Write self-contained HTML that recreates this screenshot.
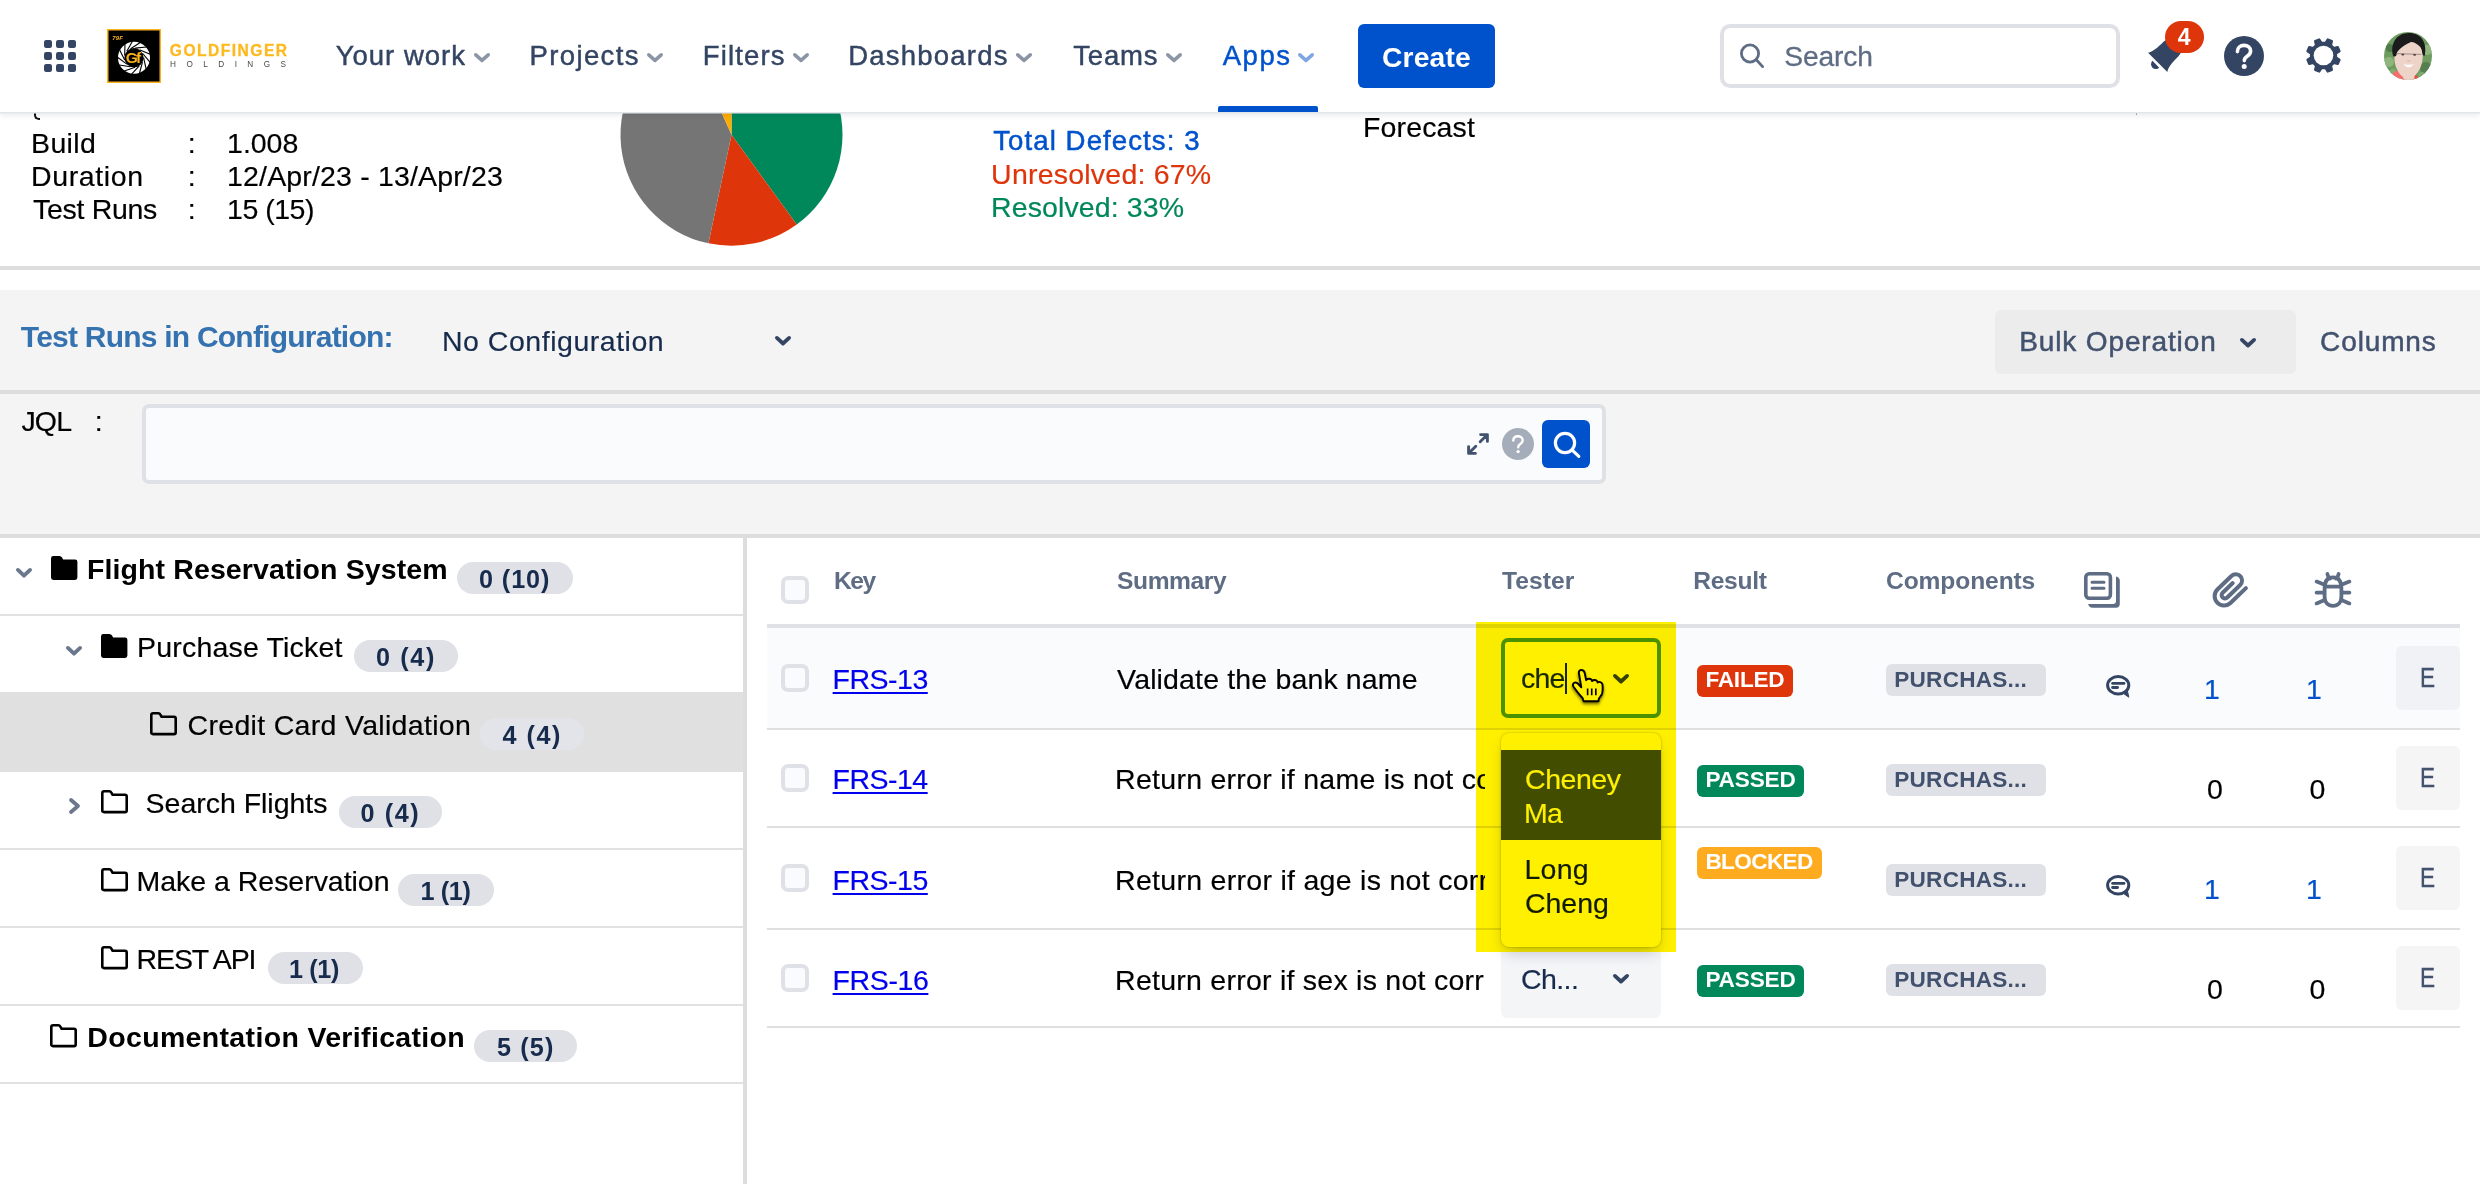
<!DOCTYPE html>
<html lang="en">
<head>
<meta charset="utf-8">
<title>Test Execution - Jira</title>
<style>
html,body{margin:0;padding:0;}
body{width:2480px;height:1184px;overflow:hidden;position:relative;background:#fff;font-family:"Liberation Sans",sans-serif;}
#app{position:absolute;left:0;top:0;width:2480px;height:1184px;overflow:hidden;background:#fff;will-change:transform;}
.t{position:absolute;white-space:pre;line-height:1;margin:0;padding:0;display:block;}
.abs,.abs>*{position:absolute;}
.box{position:absolute;box-sizing:border-box;}
svg{position:absolute;overflow:visible;}
a.t{text-decoration:underline;text-decoration-thickness:2px;text-underline-offset:3px;}
.cb{position:absolute;box-sizing:border-box;width:28px;height:28px;border:4px solid #DFE1E6;border-radius:7px;background:#FAFBFC;}
.loz{position:absolute;box-sizing:border-box;height:32px;border-radius:6px;}
.pill{position:absolute;box-sizing:border-box;height:32px;border-radius:16px;background:#DFE1E6;}
.ebtn{position:absolute;left:2396px;width:64px;height:64px;border-radius:6px;background:#F4F5F7;}
.hline{position:absolute;left:0;width:2480px;background:#DDDDDD;}
.trow{position:absolute;left:0;width:743px;}
.tline{position:absolute;left:0;width:743px;height:2px;background:#E1E1E1;}
.rline{position:absolute;left:767px;width:1693px;height:2px;background:#DFDFE1;}
</style>
</head>
<body>
<div id="app">

<main>
<section class="box" style="left:0;top:112px;width:2480px;height:154px;background:#fff">
</section>
<div class="box" style="left:34px;top:112px;width:6px;height:8px;border-left:2.5px solid #111;border-bottom:2.5px solid #111;border-radius:0 0 0 5px"></div>
<div class="box" style="left:2135.5px;top:112px;width:1.5px;height:3px;background:#9aa0a8"></div>
<span class="t" style="left:31.1px;top:128.8px;font-size:28.5px;letter-spacing:0.32px;color:#000;-webkit-text-stroke:0.18px #000;">Build</span>
<span class="t" style="left:187.8px;top:128.8px;font-size:28.5px;letter-spacing:0.00px;color:#000;-webkit-text-stroke:0.18px #000;">:</span>
<span class="t" style="left:227.1px;top:128.8px;font-size:28.5px;letter-spacing:-0.04px;color:#000;-webkit-text-stroke:0.18px #000;">1.008</span>
<span class="t" style="left:31.1px;top:162.0px;font-size:28.5px;letter-spacing:0.61px;color:#000;-webkit-text-stroke:0.18px #000;">Duration</span>
<span class="t" style="left:187.8px;top:162.0px;font-size:28.5px;letter-spacing:0.00px;color:#000;-webkit-text-stroke:0.18px #000;">:</span>
<span class="t" style="left:227.1px;top:162.0px;font-size:28.5px;letter-spacing:0.16px;color:#000;-webkit-text-stroke:0.18px #000;">12/Apr/23 - 13/Apr/23</span>
<span class="t" style="left:33.1px;top:195.3px;font-size:28.5px;letter-spacing:-0.33px;color:#000;-webkit-text-stroke:0.18px #000;">Test Runs</span>
<span class="t" style="left:187.8px;top:195.3px;font-size:28.5px;letter-spacing:0.00px;color:#000;-webkit-text-stroke:0.18px #000;">:</span>
<span class="t" style="left:227.1px;top:195.3px;font-size:28.5px;letter-spacing:-0.50px;color:#000;-webkit-text-stroke:0.18px #000;">15 (15)</span>
<svg style="left:0;top:0" width="2480" height="270" viewBox="0 0 2480 270"><path d="M731.50 134.80 L731.50 23.80 A111 111 0 0 1 796.74 224.60 Z" fill="#00875A"/><path d="M731.50 134.80 L796.74 224.60 A111 111 0 0 1 708.42 243.37 Z" fill="#DE350B"/><path d="M731.50 134.80 L708.42 243.37 A111 111 0 0 1 686.35 33.40 Z" fill="#757575"/><path d="M731.50 134.80 L686.35 33.40 A111 111 0 0 1 731.50 23.80 Z" fill="#FFAB00"/></svg>
<span class="t" style="left:993.2px;top:127.3px;font-size:27.6px;letter-spacing:1.08px;color:#0052CC;-webkit-text-stroke:0.5px #0052CC;">Total Defects: 3</span>
<span class="t" style="left:991.1px;top:160.0px;font-size:28.5px;letter-spacing:0.22px;color:#DE350B;-webkit-text-stroke:0.18px #DE350B;">Unresolved: 67%</span>
<span class="t" style="left:991.1px;top:193.0px;font-size:28.5px;letter-spacing:0.11px;color:#00875A;-webkit-text-stroke:0.18px #00875A;">Resolved: 33%</span>
<span class="t" style="left:1363.1px;top:112.8px;font-size:28.5px;letter-spacing:0.12px;color:#000;-webkit-text-stroke:0.18px #000;">Forecast</span>
<div class="hline" style="top:266px;height:4px"></div>
<section class="box" style="left:0;top:290px;width:2480px;height:246px;background:#F4F4F4"></section>
<span class="t" style="left:20.8px;top:322.2px;font-size:30px;letter-spacing:-0.77px;color:#3572B0;font-weight:700;">Test Runs in Configuration:</span>
<span class="t" style="left:441.9px;top:327.3px;font-size:28.5px;letter-spacing:0.53px;color:#172B4D;-webkit-text-stroke:0.18px #172B4D;">No Configuration</span>
<svg style="left:775.0px;top:336.0px" width="16" height="9.8" viewBox="0 0 16 9.8"><path d="M1.90 1.90 L8.00 7.50 L14.10 1.90" fill="none" stroke="#344563" stroke-width="3.8" stroke-linecap="round" stroke-linejoin="round"/></svg>
<div class="box" style="left:1995px;top:310px;width:301px;height:64px;border-radius:6px;background:#ECECED"></div>
<span class="t" style="left:2019.2px;top:328.3px;font-size:28px;letter-spacing:0.87px;color:#42526E;-webkit-text-stroke:0.5px #42526E;">Bulk Operation</span>
<svg style="left:2240.0px;top:338.0px" width="16" height="9.8" viewBox="0 0 16 9.8"><path d="M1.90 1.90 L8.00 7.50 L14.10 1.90" fill="none" stroke="#344563" stroke-width="3.8" stroke-linecap="round" stroke-linejoin="round"/></svg>
<span class="t" style="left:2320.1px;top:328.3px;font-size:28px;letter-spacing:0.87px;color:#42526E;-webkit-text-stroke:0.5px #42526E;">Columns</span>
<div class="hline" style="top:390px;height:4px"></div>
<span class="t" style="left:21.4px;top:406.7px;font-size:28.5px;letter-spacing:-0.80px;color:#000;-webkit-text-stroke:0.18px #000;">JQL</span>
<span class="t" style="left:94.8px;top:406.7px;font-size:28.5px;letter-spacing:0.00px;color:#000;-webkit-text-stroke:0.18px #000;">:</span>
<div class="box" style="left:142px;top:404px;width:1464px;height:80px;border:4px solid #DFE1E6;border-radius:7px;background:#FAFBFC"></div>
<svg style="left:1466px;top:432px" width="24" height="24" viewBox="0 0 24 24" fill="none" stroke="#42526E" stroke-width="2.9" stroke-linecap="round" stroke-linejoin="round"><path d="M14.2 9.8 L21 3 M14.6 2.6 H21.4 V9.4"/><path d="M9.8 14.2 L3 21 M2.6 14.6 V21.4 H9.4"/></svg>
<svg style="left:1502px;top:428px" width="32" height="32" viewBox="0 0 32 32"><circle cx="16" cy="16" r="16" fill="#A5ADBA"/><path d="M11.3 12.6 C11.3 9.7 13.4 8.2 16 8.2 C18.7 8.2 20.7 9.8 20.7 12.2 C20.7 14.3 19.4 15.2 18 16.2 C16.8 17 16.2 17.7 16.2 19.3" fill="none" stroke="#fff" stroke-width="2.4" stroke-linecap="round"/><circle cx="16.1" cy="23.6" r="1.7" fill="#fff"/></svg>
<div class="box" style="left:1542px;top:420px;width:48px;height:48px;border-radius:6px;background:#0052CC"></div>
<svg style="left:1542px;top:420px" width="48" height="48" viewBox="0 0 48 48"><circle cx="23" cy="23" r="9.6" fill="none" stroke="#fff" stroke-width="3.2"/><path d="M30.2 30.2 L36.8 36.4" stroke="#fff" stroke-width="3.2" stroke-linecap="round"/></svg>
<div class="hline" style="top:534px;height:4px"></div>
<aside class="box" style="left:0;top:538px;width:743px;height:646px;background:#fff"></aside>
<div class="box" style="left:743px;top:538px;width:4px;height:646px;background:#DDDDDD"></div>
<div class="box" style="left:0;top:692px;width:743px;height:79.5px;background:#E0E0E0"></div>
<div class="tline" style="top:614px"></div>
<div class="tline" style="top:848px"></div>
<div class="tline" style="top:926px"></div>
<div class="tline" style="top:1004px"></div>
<div class="tline" style="top:1082px"></div>
<svg style="left:50.5px;top:556.0px" width="26.4" height="24" preserveAspectRatio="none" viewBox="0 0 27 24"><path d="M0 2.4 Q0 0 2.4 0 H8.6 Q10.4 0 11.3 1.6 L12.4 3.4 H24.6 Q27 3.4 27 5.8 V21.6 Q27 24 24.6 24 H2.4 Q0 24 0 21.6 Z" fill="#000"/></svg>
<svg style="left:16.0px;top:567.9px" width="16" height="10" viewBox="0 0 16 10"><path d="M1.95 1.95 L8.00 7.65 L14.05 1.95" fill="none" stroke="#6B778C" stroke-width="3.9" stroke-linecap="round" stroke-linejoin="round"/></svg>
<span class="t" style="left:87.0px;top:555.0px;font-size:28.5px;letter-spacing:0.11px;color:#000;font-weight:700;">Flight Reservation System</span>
<div class="pill" style="left:457.0px;top:562.0px;width:116.0px;background:#DFE1E6"></div>
<span class="t" style="left:479.0px;top:566.5px;font-size:25.2px;letter-spacing:0.92px;color:#172B4D;font-weight:700;">0 (10)</span>
<svg style="left:100.5px;top:634.3px" width="26.4" height="24" preserveAspectRatio="none" viewBox="0 0 27 24"><path d="M0 2.4 Q0 0 2.4 0 H8.6 Q10.4 0 11.3 1.6 L12.4 3.4 H24.6 Q27 3.4 27 5.8 V21.6 Q27 24 24.6 24 H2.4 Q0 24 0 21.6 Z" fill="#000"/></svg>
<svg style="left:66.0px;top:646.1px" width="16" height="10" viewBox="0 0 16 10"><path d="M1.95 1.95 L8.00 7.65 L14.05 1.95" fill="none" stroke="#6B778C" stroke-width="3.9" stroke-linecap="round" stroke-linejoin="round"/></svg>
<span class="t" style="left:137.1px;top:633.3px;font-size:28.5px;letter-spacing:0.18px;color:#000;-webkit-text-stroke:0.18px #000;">Purchase Ticket</span>
<div class="pill" style="left:354.0px;top:640.2px;width:104.0px;background:#DFE1E6"></div>
<span class="t" style="left:376.0px;top:644.7px;font-size:25.2px;letter-spacing:1.65px;color:#172B4D;font-weight:700;">0 (4)</span>
<svg style="left:150.3px;top:712.3px" width="27" height="24" viewBox="0 0 27 24"><path d="M1.3 3 Q1.3 1.3 3 1.3 H8.4 Q9.6 1.3 10.2 2.4 L11.6 4.7 H24 Q25.7 4.7 25.7 6.4 V20.4 Q25.7 22.1 24 22.1 H3 Q1.3 22.1 1.3 20.4 Z" fill="none" stroke="#000" stroke-width="2.6" stroke-linejoin="round"/></svg>
<span class="t" style="left:187.6px;top:711.3px;font-size:28.5px;letter-spacing:0.31px;color:#000;-webkit-text-stroke:0.18px #000;">Credit Card Validation</span>
<div class="pill" style="left:479.6px;top:718.2px;width:104.2px;background:#E3E4E9"></div>
<span class="t" style="left:502.6px;top:722.7px;font-size:25.2px;letter-spacing:1.50px;color:#172B4D;font-weight:700;">4 (4)</span>
<svg style="left:100.5px;top:790.3px" width="27" height="24" viewBox="0 0 27 24"><path d="M1.3 3 Q1.3 1.3 3 1.3 H8.4 Q9.6 1.3 10.2 2.4 L11.6 4.7 H24 Q25.7 4.7 25.7 6.4 V20.4 Q25.7 22.1 24 22.1 H3 Q1.3 22.1 1.3 20.4 Z" fill="none" stroke="#000" stroke-width="2.6" stroke-linejoin="round"/></svg>
<svg style="left:69.0px;top:797.8px" width="11.5" height="16" viewBox="0 0 11.5 16"><path d="M2 2 L9 8 L2 14" fill="none" stroke="#6B778C" stroke-width="3.8" stroke-linecap="round" stroke-linejoin="round"/></svg>
<span class="t" style="left:145.6px;top:789.3px;font-size:28.5px;letter-spacing:-0.02px;color:#000;-webkit-text-stroke:0.18px #000;">Search Flights</span>
<div class="pill" style="left:339.0px;top:796.2px;width:103.0px;background:#DFE1E6"></div>
<span class="t" style="left:360.6px;top:800.7px;font-size:25.2px;letter-spacing:1.57px;color:#172B4D;font-weight:700;">0 (4)</span>
<svg style="left:100.5px;top:868.3px" width="27" height="24" viewBox="0 0 27 24"><path d="M1.3 3 Q1.3 1.3 3 1.3 H8.4 Q9.6 1.3 10.2 2.4 L11.6 4.7 H24 Q25.7 4.7 25.7 6.4 V20.4 Q25.7 22.1 24 22.1 H3 Q1.3 22.1 1.3 20.4 Z" fill="none" stroke="#000" stroke-width="2.6" stroke-linejoin="round"/></svg>
<span class="t" style="left:136.6px;top:867.3px;font-size:28.5px;letter-spacing:-0.03px;color:#000;-webkit-text-stroke:0.18px #000;">Make a Reservation</span>
<div class="pill" style="left:398.4px;top:874.2px;width:95.6px;background:#DFE1E6"></div>
<span class="t" style="left:420.4px;top:878.7px;font-size:25.2px;letter-spacing:-0.35px;color:#172B4D;font-weight:700;">1 (1)</span>
<svg style="left:100.5px;top:946.3px" width="27" height="24" viewBox="0 0 27 24"><path d="M1.3 3 Q1.3 1.3 3 1.3 H8.4 Q9.6 1.3 10.2 2.4 L11.6 4.7 H24 Q25.7 4.7 25.7 6.4 V20.4 Q25.7 22.1 24 22.1 H3 Q1.3 22.1 1.3 20.4 Z" fill="none" stroke="#000" stroke-width="2.6" stroke-linejoin="round"/></svg>
<span class="t" style="left:136.6px;top:945.3px;font-size:28.5px;letter-spacing:-1.12px;color:#000;-webkit-text-stroke:0.18px #000;">REST API</span>
<div class="pill" style="left:267.8px;top:952.2px;width:95.4px;background:#DFE1E6"></div>
<span class="t" style="left:289.0px;top:956.7px;font-size:25.2px;letter-spacing:-0.35px;color:#172B4D;font-weight:700;">1 (1)</span>
<svg style="left:50.3px;top:1024.3px" width="27" height="24" viewBox="0 0 27 24"><path d="M1.3 3 Q1.3 1.3 3 1.3 H8.4 Q9.6 1.3 10.2 2.4 L11.6 4.7 H24 Q25.7 4.7 25.7 6.4 V20.4 Q25.7 22.1 24 22.1 H3 Q1.3 22.1 1.3 20.4 Z" fill="none" stroke="#000" stroke-width="2.6" stroke-linejoin="round"/></svg>
<span class="t" style="left:87.3px;top:1023.3px;font-size:28.5px;letter-spacing:0.34px;color:#000;font-weight:700;">Documentation Verification</span>
<div class="pill" style="left:473.8px;top:1030.2px;width:103.2px;background:#DFE1E6"></div>
<span class="t" style="left:497.0px;top:1034.7px;font-size:25.2px;letter-spacing:1.15px;color:#172B4D;font-weight:700;">5 (5)</span>
<section class="box" style="left:747px;top:538px;width:1733px;height:646px;background:#fff"></section>
<div class="box" style="left:767px;top:628px;width:1693px;height:100px;background:#FAFBFC"></div>
<div class="cb" style="left:781px;top:576px"></div>
<span class="t" style="left:834.0px;top:568.8px;font-size:24.6px;letter-spacing:-1.47px;color:#5E6C84;font-weight:700;">Key</span>
<span class="t" style="left:1117.0px;top:568.8px;font-size:24.6px;letter-spacing:-0.40px;color:#5E6C84;font-weight:700;">Summary</span>
<span class="t" style="left:1502.0px;top:568.8px;font-size:24.6px;letter-spacing:0.06px;color:#5E6C84;font-weight:700;">Tester</span>
<span class="t" style="left:1693.3px;top:568.8px;font-size:24.6px;letter-spacing:-0.31px;color:#5E6C84;font-weight:700;">Result</span>
<span class="t" style="left:1886.0px;top:568.8px;font-size:24.6px;letter-spacing:-0.11px;color:#5E6C84;font-weight:700;">Components</span>
<svg style="left:2084px;top:572px" width="36" height="36" viewBox="0 0 36 36"><rect x="1.8" y="1.8" width="24.6" height="24.4" rx="3.4" fill="none" stroke="#5E6C84" stroke-width="3.6"/><path d="M8 10.2 H20 M8 16.2 H20" stroke="#5E6C84" stroke-width="3" stroke-linecap="round"/><path d="M32 4.4 Q35.8 5 35.8 8.8 V31.8 Q35.8 35.8 31.8 35.8 H8.6 Q5 35.8 4.2 32 H29 Q32 32 32 29 Z" fill="#5E6C84"/></svg>
<svg style="left:2212px;top:571px" width="36" height="38" viewBox="0 0 36 38"><path d="M33.92 17.08 L18.46 32.01 A9.4 9.4 0 0 1 5.40 18.49 L19.42 4.94 A6.3 6.3 0 0 1 28.18 14.01 L15.23 26.51 A3.3 3.3 0 0 1 10.64 21.76 L20.71 12.04" fill="none" stroke="#5E6C84" stroke-width="4" stroke-linecap="round" stroke-linejoin="round"/></svg>
<svg style="left:2314px;top:571px" width="38" height="38" viewBox="0 0 38 38" fill="none" stroke="#5E6C84" stroke-width="3.8" stroke-linecap="round" stroke-linejoin="round"><path d="M10.6 17.5 C10.6 9.8 14 6.4 19 6.4 C24 6.4 27.4 9.8 27.4 17.5 V25.5 C27.4 31.5 23.8 34.9 19 34.9 C14.2 34.9 10.6 31.5 10.6 25.5 Z"/><path d="M11 15.7 H27"/><path d="M13.4 3 Q13.8 6 16 7.4 M24.6 3 Q24.2 6 22 7.4"/><path d="M10 13.6 L2.6 10.6 M10.2 21.6 H2.6 M10.6 29 L2.6 32.4 M28 13.6 L35.4 10.6 M27.8 21.6 H35.4 M27.4 29 L35.4 32.4"/></svg>
<div class="box" style="left:767px;top:624px;width:1693px;height:4px;background:#DFE1E6"></div>
<div class="rline" style="top:728px"></div>
<div class="rline" style="top:826px"></div>
<div class="rline" style="top:928px"></div>
<div class="rline" style="top:1026px"></div>
<div class="cb" style="left:781px;top:664px"></div>
<a class="t" style="left:832.6px;top:665.3px;font-size:28.5px;letter-spacing:-0.50px;color:#0000EE;-webkit-text-stroke:0.18px #0000EE;">FRS-13</a>
<div class="cb" style="left:781px;top:764px"></div>
<a class="t" style="left:832.6px;top:765.3px;font-size:28.5px;letter-spacing:-0.52px;color:#0000EE;-webkit-text-stroke:0.18px #0000EE;">FRS-14</a>
<div class="cb" style="left:781px;top:864px"></div>
<a class="t" style="left:832.6px;top:865.8px;font-size:28.5px;letter-spacing:-0.50px;color:#0000EE;-webkit-text-stroke:0.18px #0000EE;">FRS-15</a>
<div class="cb" style="left:781px;top:964px"></div>
<a class="t" style="left:832.6px;top:965.8px;font-size:28.5px;letter-spacing:-0.40px;color:#0000EE;-webkit-text-stroke:0.18px #0000EE;">FRS-16</a>
<div class="loz" style="left:1697px;top:665px;width:96.0px;background:#DE350B"></div>
<span class="t" style="left:1705.4px;top:669.3px;font-size:22.6px;letter-spacing:-0.22px;color:#fff;font-weight:700;">FAILED</span>
<div class="loz" style="left:1697px;top:765px;width:107.0px;background:#00875A"></div>
<span class="t" style="left:1705.4px;top:769.3px;font-size:22.6px;letter-spacing:-0.16px;color:#fff;font-weight:700;">PASSED</span>
<div class="loz" style="left:1697px;top:847px;width:124.6px;background:#FFAB1F"></div>
<span class="t" style="left:1705.4px;top:851.3px;font-size:22.6px;letter-spacing:-0.63px;color:#fff;font-weight:700;">BLOCKED</span>
<div class="loz" style="left:1697px;top:965px;width:107.0px;background:#00875A"></div>
<span class="t" style="left:1705.4px;top:969.3px;font-size:22.6px;letter-spacing:-0.16px;color:#fff;font-weight:700;">PASSED</span>
<div class="loz" style="left:1886px;top:664px;width:160px;background:#DFE1E6"></div>
<span class="t" style="left:1894.3px;top:668.7px;font-size:22.6px;letter-spacing:0.21px;color:#42526E;font-weight:700;">PURCHAS...</span>
<div class="loz" style="left:1886px;top:764px;width:160px;background:#DFE1E6"></div>
<span class="t" style="left:1894.3px;top:768.7px;font-size:22.6px;letter-spacing:0.21px;color:#42526E;font-weight:700;">PURCHAS...</span>
<div class="loz" style="left:1886px;top:864px;width:160px;background:#DFE1E6"></div>
<span class="t" style="left:1894.3px;top:868.7px;font-size:22.6px;letter-spacing:0.21px;color:#42526E;font-weight:700;">PURCHAS...</span>
<div class="loz" style="left:1886px;top:964px;width:160px;background:#DFE1E6"></div>
<span class="t" style="left:1894.3px;top:968.7px;font-size:22.6px;letter-spacing:0.21px;color:#42526E;font-weight:700;">PURCHAS...</span>
<svg style="left:2105.6px;top:674.6px" width="26" height="24" viewBox="0 0 26 24"><ellipse cx="12.2" cy="10.3" rx="10.6" ry="8.7" fill="none" stroke="#344563" stroke-width="3"/><path d="M16.2 17.6 L22.8 22.2 L21.2 14.8 Z" fill="#344563" stroke="#344563" stroke-width="1" stroke-linejoin="round"/><path d="M6.6 8.4 H18" stroke="#344563" stroke-width="2.8" stroke-linecap="round"/><path d="M6.6 12.5 H11.6" stroke="#344563" stroke-width="2.8" stroke-linecap="round"/></svg>
<svg style="left:2105.6px;top:874.6px" width="26" height="24" viewBox="0 0 26 24"><ellipse cx="12.2" cy="10.3" rx="10.6" ry="8.7" fill="none" stroke="#344563" stroke-width="3"/><path d="M16.2 17.6 L22.8 22.2 L21.2 14.8 Z" fill="#344563" stroke="#344563" stroke-width="1" stroke-linejoin="round"/><path d="M6.6 8.4 H18" stroke="#344563" stroke-width="2.8" stroke-linecap="round"/><path d="M6.6 12.5 H11.6" stroke="#344563" stroke-width="2.8" stroke-linecap="round"/></svg>
<span class="t" style="left:2204.0px;top:675.3px;font-size:28.5px;letter-spacing:0.00px;color:#0052CC;-webkit-text-stroke:0.18px #0052CC;">1</span>
<span class="t" style="left:2306.0px;top:675.3px;font-size:28.5px;letter-spacing:0.00px;color:#0052CC;-webkit-text-stroke:0.18px #0052CC;">1</span>
<span class="t" style="left:2207.0px;top:775.3px;font-size:28.5px;letter-spacing:0.00px;color:#000;-webkit-text-stroke:0.18px #000;">0</span>
<span class="t" style="left:2309.5px;top:775.3px;font-size:28.5px;letter-spacing:0.00px;color:#000;-webkit-text-stroke:0.18px #000;">0</span>
<span class="t" style="left:2204.0px;top:875.3px;font-size:28.5px;letter-spacing:0.00px;color:#0052CC;-webkit-text-stroke:0.18px #0052CC;">1</span>
<span class="t" style="left:2306.0px;top:875.3px;font-size:28.5px;letter-spacing:0.00px;color:#0052CC;-webkit-text-stroke:0.18px #0052CC;">1</span>
<span class="t" style="left:2207.0px;top:975.3px;font-size:28.5px;letter-spacing:0.00px;color:#000;-webkit-text-stroke:0.18px #000;">0</span>
<span class="t" style="left:2309.5px;top:975.3px;font-size:28.5px;letter-spacing:0.00px;color:#000;-webkit-text-stroke:0.18px #000;">0</span>
<div class="ebtn" style="top:646px;background:#F1F2F5"></div>
<span class="t" style="left:2418.0px;top:663.3px;font-size:28.3px;letter-spacing:0.00px;color:#42526E;-webkit-text-stroke:0.3px #42526E;transform:scaleX(0.8);transform-origin:50% 50%;">E</span>
<div class="ebtn" style="top:746px;background:#F5F5F6"></div>
<span class="t" style="left:2418.0px;top:763.3px;font-size:28.3px;letter-spacing:0.00px;color:#42526E;-webkit-text-stroke:0.3px #42526E;transform:scaleX(0.8);transform-origin:50% 50%;">E</span>
<div class="ebtn" style="top:846px;background:#F5F5F6"></div>
<span class="t" style="left:2418.0px;top:863.3px;font-size:28.3px;letter-spacing:0.00px;color:#42526E;-webkit-text-stroke:0.3px #42526E;transform:scaleX(0.8);transform-origin:50% 50%;">E</span>
<div class="ebtn" style="top:946px;background:#F5F5F6"></div>
<span class="t" style="left:2418.0px;top:963.3px;font-size:28.3px;letter-spacing:0.00px;color:#42526E;-webkit-text-stroke:0.3px #42526E;transform:scaleX(0.8);transform-origin:50% 50%;">E</span>
<div class="box" style="left:1501px;top:938px;width:160px;height:80px;border-radius:6px;background:#F4F5F7"></div>
<span class="t" style="left:1521.1px;top:964.5px;font-size:28.5px;letter-spacing:-0.61px;color:#172B4D;-webkit-text-stroke:0.18px #172B4D;">Ch...</span>
<svg style="left:1613.0px;top:974.2px" width="16" height="9.8" viewBox="0 0 16 9.8"><path d="M1.90 1.90 L8.00 7.50 L14.10 1.90" fill="none" stroke="#344563" stroke-width="3.8" stroke-linecap="round" stroke-linejoin="round"/></svg>
<div class="box" style="left:1501px;top:733px;width:160px;height:214px;border-radius:8px;background:#fff;box-shadow:0 0 2px rgba(9,30,66,0.35),0 8px 16px -4px rgba(9,30,66,0.28)"></div>
<div class="box hl" style="left:1476px;top:622px;width:200px;height:330px;overflow:hidden;background:#FFF000">
<div class="box" style="left:0;top:2px;width:200px;height:4px;background:#DFD400"></div>
<div class="box" style="left:0;top:6px;width:200px;height:100px;background:#FAEC00"></div>
<div class="box" style="left:0;top:106px;width:200px;height:2px;background:#DFD200"></div>
<div class="box" style="left:0;top:204px;width:200px;height:2px;background:#DFD200"></div>
<div class="box" style="left:0;top:306px;width:200px;height:2px;background:#DFD200"></div>
<div class="box" style="left:25px;top:16px;width:160px;height:80px;border:4px solid #4C9100;border-radius:7px;background:#FFF000"></div>
<span class="t" style="left:45.1px;top:41.8px;font-size:28.5px;letter-spacing:-0.84px;color:#172800;-webkit-text-stroke:0.18px #172800;">che</span>
<div class="box" style="left:89px;top:41px;width:2px;height:31px;background:#172800"></div>
<svg style="left:137.0px;top:52.0px" width="16" height="9.8" viewBox="0 0 16 9.8"><path d="M1.90 1.90 L8.00 7.50 L14.10 1.90" fill="none" stroke="#344100" stroke-width="3.8" stroke-linecap="round" stroke-linejoin="round"/></svg>
<div class="box" style="left:25px;top:111px;width:160px;height:214px;border-radius:8px;background:#FFF000;box-shadow:0 0 2px rgba(9,28,0,0.35),0 8px 16px -4px rgba(9,28,0,0.28)"></div>
<div class="box" style="left:25px;top:128px;width:160px;height:90px;background:#424D00"></div>
<span class="t" style="left:49.1px;top:143.3px;font-size:28.5px;letter-spacing:-0.47px;color:#FFF000;-webkit-text-stroke:0.18px #FFF000;">Cheney</span>
<span class="t" style="left:48.1px;top:176.9px;font-size:28.5px;letter-spacing:-0.72px;color:#FFF000;-webkit-text-stroke:0.18px #FFF000;">Ma</span>
<span class="t" style="left:48.5px;top:233.3px;font-size:28.5px;letter-spacing:0.22px;color:#101A00;-webkit-text-stroke:0.18px #101A00;">Long</span>
<span class="t" style="left:49.1px;top:266.7px;font-size:28.5px;letter-spacing:-0.08px;color:#101A00;-webkit-text-stroke:0.18px #101A00;">Cheng</span>
<svg style="left:95.5px;top:46px;filter:drop-shadow(0.5px 2px 1.6px rgba(0,0,0,0.55))" width="40" height="40" viewBox="1040 410 584 584"><path d="M1140 480 C1140 445 1160 438 1182 440 C1208 444 1222 462 1228 492 L1246 588 C1262 566 1300 556 1322 580 C1326 584 1330 592 1332 600 C1352 578 1392 578 1410 606 C1412 610 1414 616 1414 622 C1436 604 1472 614 1484 646 C1490 690 1490 740 1480 782 C1472 812 1440 840 1432 858 L1426 896 L1210 896 L1196 852 C1170 824 1110 752 1062 684 C1048 660 1052 640 1072 626 C1092 614 1112 624 1128 640 L1176 692 Z" fill="#FFF000" stroke="#000" stroke-width="28" stroke-linejoin="round"/><path d="M1268 708 V808 M1328 708 V808 M1388 708 V808" stroke="#000" stroke-width="24" stroke-linecap="butt"/></svg>
</div>
<div class="box" style="left:1117px;top:657.0px;width:368px;height:44px;overflow:hidden">
<span class="t" style="left:0.1px;top:8.3px;font-size:28.5px;letter-spacing:0.15px;color:#000;-webkit-text-stroke:0.18px #000;">Validate the bank name</span>
</div>
<div class="box" style="left:1117px;top:757.0px;width:368px;height:44px;overflow:hidden">
<span class="t" style="left:-1.9px;top:8.3px;font-size:28.5px;letter-spacing:0.27px;color:#000;-webkit-text-stroke:0.18px #000;">Return error if name is not correct</span>
</div>
<div class="box" style="left:1117px;top:857.5px;width:368px;height:44px;overflow:hidden">
<span class="t" style="left:-1.9px;top:8.3px;font-size:28.5px;letter-spacing:0.29px;color:#000;-webkit-text-stroke:0.18px #000;">Return error if age is not correct</span>
</div>
<div class="box" style="left:1117px;top:957.5px;width:368px;height:44px;overflow:hidden">
<span class="t" style="left:-1.9px;top:8.3px;font-size:28.5px;letter-spacing:0.25px;color:#000;-webkit-text-stroke:0.18px #000;">Return error if sex is not correct</span>
</div>
</main>
<header class="box" style="left:0;top:0;width:2480px;height:112px;background:#fff;z-index:5;box-shadow:0 1.5px 0 #E3E5EA, 0 3px 6px rgba(9,30,66,0.10);">
<svg style="left:44px;top:40px" width="32" height="32" viewBox="0 0 32 32" fill="#344563"><rect x="0" y="0" width="8" height="8" rx="2.2"/><rect x="12" y="0" width="8" height="8" rx="2.2"/><rect x="24" y="0" width="8" height="8" rx="2.2"/><rect x="0" y="12" width="8" height="8" rx="2.2"/><rect x="12" y="12" width="8" height="8" rx="2.2"/><rect x="24" y="12" width="8" height="8" rx="2.2"/><rect x="0" y="24" width="8" height="8" rx="2.2"/><rect x="12" y="24" width="8" height="8" rx="2.2"/><rect x="24" y="24" width="8" height="8" rx="2.2"/></svg>
<svg style="left:107px;top:29px" width="54" height="54" viewBox="0 0 54 54"><rect x="0.75" y="0.75" width="52.5" height="52.5" fill="#000" stroke="#FBB31C" stroke-width="1.5"/><circle cx="27" cy="28.7" r="16" fill="#fff"/><path d="M36.60 28.70 L39.07 39.95" stroke="#000" stroke-width="1.1"/><path d="M35.50 33.16 L32.46 44.27" stroke="#000" stroke-width="1.1"/><path d="M32.45 36.60 L24.60 45.02" stroke="#000" stroke-width="1.1"/><path d="M28.16 38.23 L17.29 42.04" stroke="#000" stroke-width="1.1"/><path d="M23.60 37.68 L12.20 36.00" stroke="#000" stroke-width="1.1"/><path d="M19.81 35.07 L10.51 28.29" stroke="#000" stroke-width="1.1"/><path d="M17.68 31.00 L12.59 20.67" stroke="#000" stroke-width="1.1"/><path d="M17.68 26.40 L17.97 14.89" stroke="#000" stroke-width="1.1"/><path d="M19.81 22.33 L25.42 12.28" stroke="#000" stroke-width="1.1"/><path d="M23.60 19.72 L33.24 13.42" stroke="#000" stroke-width="1.1"/><path d="M28.16 19.17 L39.62 18.07" stroke="#000" stroke-width="1.1"/><path d="M32.45 20.80 L43.11 25.15" stroke="#000" stroke-width="1.1"/><path d="M35.50 24.24 L42.92 33.05" stroke="#000" stroke-width="1.1"/><circle cx="27" cy="28.7" r="9.6" fill="#000"/></svg>
<span class="t" style="left:125.8px;top:50.4px;font-size:15.5px;letter-spacing:-1.86px;color:#FBB31C;font-weight:700;">Gf</span>
<span class="t" style="left:112.2px;top:34.6px;font-size:6px;letter-spacing:0.16px;color:#FBB31C;font-weight:700;font-style:italic;">79F</span>
<span class="t" style="left:169.8px;top:43.2px;font-size:15.6px;letter-spacing:1.48px;color:#FDB91E;font-weight:700;-webkit-text-stroke:0.3px #FDB91E;">GOLDFINGER</span>
<span class="t" style="left:170.0px;top:61.0px;font-size:8.2px;letter-spacing:10.47px;color:#4a4a4a;">HOLDINGS</span>
<span class="t" style="left:335.7px;top:42.4px;font-size:27.5px;letter-spacing:1.00px;color:#344563;-webkit-text-stroke:0.45px #344563;">Your work</span>
<svg style="left:474.0px;top:52.5px" width="16" height="9.5" viewBox="0 0 16 9.5"><path d="M1.80 1.80 L8.00 7.30 L14.20 1.80" fill="none" stroke="#8C95A6" stroke-width="3.6" stroke-linecap="round" stroke-linejoin="round"/></svg>
<span class="t" style="left:529.5px;top:42.4px;font-size:27.5px;letter-spacing:1.38px;color:#344563;-webkit-text-stroke:0.45px #344563;">Projects</span>
<svg style="left:647.0px;top:52.5px" width="16" height="9.5" viewBox="0 0 16 9.5"><path d="M1.80 1.80 L8.00 7.30 L14.20 1.80" fill="none" stroke="#8C95A6" stroke-width="3.6" stroke-linecap="round" stroke-linejoin="round"/></svg>
<span class="t" style="left:702.7px;top:42.4px;font-size:27.5px;letter-spacing:1.16px;color:#344563;-webkit-text-stroke:0.45px #344563;">Filters</span>
<svg style="left:793.0px;top:52.5px" width="16" height="9.5" viewBox="0 0 16 9.5"><path d="M1.80 1.80 L8.00 7.30 L14.20 1.80" fill="none" stroke="#8C95A6" stroke-width="3.6" stroke-linecap="round" stroke-linejoin="round"/></svg>
<span class="t" style="left:848.2px;top:42.4px;font-size:27.5px;letter-spacing:1.22px;color:#344563;-webkit-text-stroke:0.45px #344563;">Dashboards</span>
<svg style="left:1016.0px;top:52.5px" width="16" height="9.5" viewBox="0 0 16 9.5"><path d="M1.80 1.80 L8.00 7.30 L14.20 1.80" fill="none" stroke="#8C95A6" stroke-width="3.6" stroke-linecap="round" stroke-linejoin="round"/></svg>
<span class="t" style="left:1073.2px;top:42.4px;font-size:27.5px;letter-spacing:0.83px;color:#344563;-webkit-text-stroke:0.45px #344563;">Teams</span>
<svg style="left:1166.0px;top:52.5px" width="16" height="9.5" viewBox="0 0 16 9.5"><path d="M1.80 1.80 L8.00 7.30 L14.20 1.80" fill="none" stroke="#8C95A6" stroke-width="3.6" stroke-linecap="round" stroke-linejoin="round"/></svg>
<span class="t" style="left:1222.7px;top:42.4px;font-size:27.5px;letter-spacing:1.54px;color:#0052CC;-webkit-text-stroke:0.45px #0052CC;">Apps</span>
<svg style="left:1298.0px;top:52.5px" width="16" height="9.5" viewBox="0 0 16 9.5"><path d="M1.80 1.80 L8.00 7.30 L14.20 1.80" fill="none" stroke="#7FA5E3" stroke-width="3.6" stroke-linecap="round" stroke-linejoin="round"/></svg>
<div class="box" style="left:1218px;top:106px;width:100px;height:6px;background:#0052CC;border-radius:2px 2px 0 0"></div>
<div class="box" style="left:1358px;top:24px;width:137px;height:64px;background:#0052CC;border-radius:6px"></div>
<span class="t" style="left:1382.0px;top:42.8px;font-size:28.2px;letter-spacing:0.19px;color:#fff;font-weight:700;">Create</span>
<div class="box" style="left:1720px;top:24px;width:400px;height:64px;border:4px solid #DFE1E6;border-radius:10px;background:#fff"></div>
<svg style="left:1738px;top:42px" width="28" height="28" viewBox="0 0 28 28"><circle cx="12" cy="11.5" r="8.6" fill="none" stroke="#5E6C84" stroke-width="2.8"/><path d="M18.3 17.8 L24.6 24.6" stroke="#5E6C84" stroke-width="2.8" stroke-linecap="round"/></svg>
<span class="t" style="left:1784.2px;top:41.5px;font-size:28.2px;letter-spacing:-0.09px;color:#5E6C84;-webkit-text-stroke:0.3px #5E6C84;">Search</span>
<svg style="left:0;top:0" width="2480" height="112" viewBox="0 0 2480 112"><g transform="translate(2157.7 62.4) rotate(45)" fill="#344563"><path d="M-13.6 0 C-11 -4 -10.4 -9 -10.4 -19 A10.4 10.4 0 0 1 10.4 -19 C10.4 -9 11 -4 13.6 0 Z"/><path d="M-4.8 2.6 A4.8 4.8 0 0 0 4.8 2.6 Z"/></g></svg>
<div class="box" style="left:2165px;top:21px;width:39px;height:32px;border-radius:16px;background:#DE350B"></div>
<span class="t" style="left:2177.8px;top:26.4px;font-size:23px;letter-spacing:0.00px;color:#fff;font-weight:700;">4</span>
<svg style="left:2224px;top:36px" width="40" height="40" viewBox="0 0 40 40"><circle cx="20" cy="20" r="20" fill="#344563"/><path d="M13.4 15.6 C13.4 11.6 16.3 9.4 20 9.4 C23.8 9.4 26.6 11.7 26.6 15.1 C26.6 18 24.8 19.3 22.9 20.6 C21.3 21.7 20.3 22.5 20.3 24.6" fill="none" stroke="#fff" stroke-width="3.6" stroke-linecap="round"/><circle cx="20.2" cy="30.6" r="2.5" fill="#fff"/></svg>
<svg style="left:2303px;top:35px" width="42" height="42" viewBox="0 0 42 42"><path d="M22.47 8.06 L24.73 4.55 L28.79 6.23 L27.91 10.31 L30.69 13.09 L34.77 12.21 L36.45 16.27 L32.94 18.53 L32.94 22.47 L36.45 24.73 L34.77 28.79 L30.69 27.91 L27.91 30.69 L28.79 34.77 L24.73 36.45 L22.47 32.94 L18.53 32.94 L16.27 36.45 L12.21 34.77 L13.09 30.69 L10.31 27.91 L6.23 28.79 L4.55 24.73 L8.06 22.47 L8.06 18.53 L4.55 16.27 L6.23 12.21 L10.31 13.09 L13.09 10.31 L12.21 6.23 L16.27 4.55 L18.53 8.06 Z" fill="#344563" stroke="#344563" stroke-width="2.4" stroke-linejoin="round"/><circle cx="20.5" cy="20.5" r="9.8" fill="#fff"/></svg>
<svg style="left:2384px;top:32px" width="48" height="48" viewBox="0 0 48 48"><defs><clipPath id="avc"><circle cx="24" cy="24" r="24"/></clipPath></defs><g clip-path="url(#avc)"><rect width="48" height="48" fill="#6E9C60"/><circle cx="5" cy="30" r="5" fill="#8DB57C"/><circle cx="43" cy="18" r="5" fill="#8FB77E"/><circle cx="42" cy="36" r="6" fill="#557F4E"/><circle cx="6" cy="16" r="4" fill="#4F7A49"/><circle cx="38" cy="44" r="4" fill="#7FA870"/><circle cx="9" cy="40" r="3" fill="#84AD74"/><path d="M7 49 L9.6 40.4 Q13.6 36.6 17.4 40 L23 49 Z" fill="#F46E6E"/><path d="M28.6 49 L30.4 42.6 L33.8 44.6 L33.4 49 Z" fill="#E64B3E"/><path d="M10.4 22 C9.8 32 12.8 40 19 45 L20.4 49 L30 49 L30.6 44 C36 39 39.2 31 38.7 22 C38 12 32 8 25 8 C17 8 11 12 10.4 22 Z" fill="#EED4C8"/><path d="M9 23.4 C6.2 12 12 1 25 1 C37.4 1 43.4 11 40.8 23.4 C39.6 24.6 38.6 23 38.3 21 C38 16.6 36 13.8 33 12.2 C30 10.4 28 9.4 26 10.4 C22 12.4 17 14.8 13.6 19.4 C12.6 20.8 12.8 22.4 12.2 23.8 C11.2 25 9.6 24.8 9 23.4 Z" fill="#1B1B1D"/><path d="M12.4 21.6 L37.2 22.4" stroke="#8f857e" stroke-width="0.9"/><ellipse cx="18.8" cy="22.6" rx="1.5" ry="0.9" fill="#4a3a38"/><ellipse cx="30.6" cy="22.8" rx="1.5" ry="0.9" fill="#4a3a38"/><path d="M19.4 32.2 Q24.6 38.4 30 32.2 Q24.6 33.4 19.4 32.2 Z" fill="#fff" stroke="#f3e6e0" stroke-width="0.5"/><path d="M23 28.6 Q24.6 29.6 26.2 28.6" stroke="#d9b1a3" stroke-width="0.9" fill="none"/></g></svg>
</header>

</div>
</body>
</html>
